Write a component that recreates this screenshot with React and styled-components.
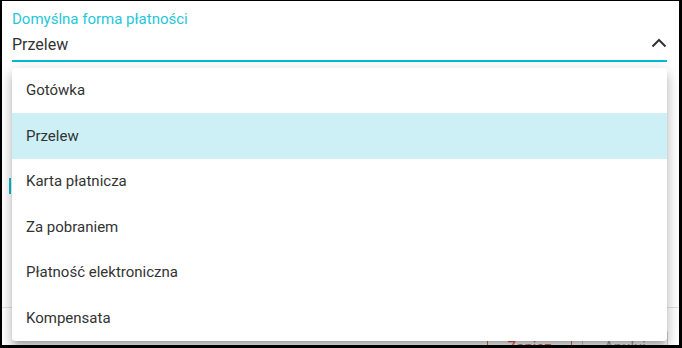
import React from "react";
import styled, { createGlobalStyle } from "styled-components";

const GlobalStyle = createGlobalStyle`
  html, body { margin: 0; padding: 0; background: #fff; }
  body { font-family: Roboto, "Noto Sans", Arial, sans-serif; }
  * { box-sizing: border-box; }
`;

const Frame = styled.div`
  position: relative;
  width: 682px;
  height: 348px;
  overflow: hidden;
  background: #fff;
  border-style: solid;
  border-color: #000;
  border-width: 1px 3px 3px 2px;
  display: flex;
  flex-direction: column;
`;

const Form = styled.div`
  padding: 0 12px 0 10px;
`;

const Field = styled.div`
  position: relative;
  padding-top: 8.5px;
`;

const Label = styled.div`
  font-size: 15px;
  line-height: 18px;
  height: 18px;
  color: #26c6da;
  white-space: nowrap;
`;

const SelectRow = styled.div`
  margin-top: 7px;
  padding-bottom: 5.5px;
  border-bottom: 2px solid #00bcd4;
  display: flex;
  align-items: center;
  justify-content: space-between;
`;

const Value = styled.div`
  font-size: 16px;
  line-height: 20px;
  height: 20px;
  color: #333;
`;

const Chevron = styled.svg`
  width: 16px;
  height: 10px;
  margin: 0 0 3px 0;
  display: block;
`;

const Menu = styled.ul`
  position: absolute;
  left: 0;
  right: 0;
  top: calc(100% + 5.5px);
  margin: 0;
  padding: 0;
  list-style: none;
  background: #fff;
  border-radius: 4px;
  overflow: hidden;
  z-index: 10;
  box-shadow: 0px 5px 5px -3px rgba(0, 0, 0, 0.2),
    0px 8px 10px 1px rgba(0, 0, 0, 0.14), 0px 3px 14px 2px rgba(0, 0, 0, 0.12);
`;

const Item = styled.li`
  height: 45.5px;
  display: flex;
  align-items: center;
  padding: 0 14px;
  font-size: 15px;
  color: #333;
  background: ${(p) => (p.$selected ? "#ccf0f6" : "#fff")};
  white-space: nowrap;
`;

const Body = styled.div`
  height: 245px;
  padding-top: 116px;
`;

const FocusMark = styled.div`
  width: 2px;
  height: 16px;
  margin-left: -3px;
  background: #00bcd4;
`;

const Divider = styled.div`
  height: 1px;
  background: #e0e0e0;
  flex: none;
`;

const Footer = styled.div`
  display: flex;
  justify-content: flex-end;
  gap: 10px;
  padding: 20.5px 11px 0 0;
`;

const Button = styled.button`
  height: 36px;
  width: ${(p) => p.$width}px;
  border: 1px solid ${(p) => (p.$primary ? "#e2673f" : "#cfcfcf")};
  border-radius: 4px;
  background: #fff;
  color: ${(p) => (p.$primary ? "#e2673f" : "#9e9e9e")};
  font-family: Roboto, Arial, sans-serif;
  font-size: 15px;
  padding: 0;
  flex: none;
`;

const options = [
  "Gotówka",
  "Przelew",
  "Karta płatnicza",
  "Za pobraniem",
  "Płatność elektroniczna",
  "Kompensata",
];

export default function App() {
  const selected = "Przelew";
  return (
    <>
      <GlobalStyle />
      <Frame>
        <Form>
          <Field>
            <Label>Domyślna forma płatności</Label>
            <SelectRow>
              <Value>{selected}</Value>
              <Chevron viewBox="0 0 16 10">
                <polyline
                  points="1.5,8.5 8,2 14.5,8.5"
                  fill="none"
                  stroke="#333"
                  strokeWidth="2"
                />
              </Chevron>
            </SelectRow>
            <Menu>
              {options.map((o) => (
                <Item key={o} $selected={o === selected}>
                  {o}
                </Item>
              ))}
            </Menu>
          </Field>
          <Body>
            <FocusMark />
          </Body>
        </Form>
        <Divider />
        <Footer>
          <Button $primary $width={85}>Zapisz</Button>
          <Button $width={86}>Anuluj</Button>
        </Footer>
      </Frame>
    </>
  );
}
